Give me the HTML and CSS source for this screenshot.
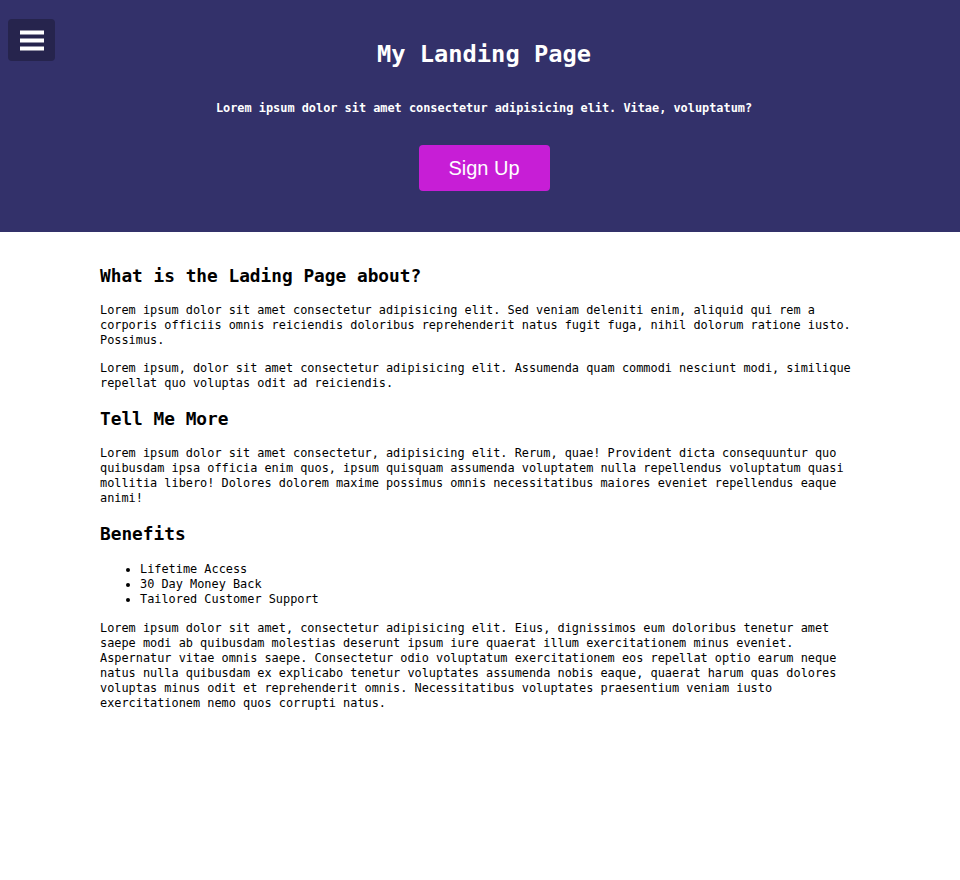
FILE: index.html
```html
<!DOCTYPE html>
<html lang="en">
<head>
<meta charset="utf-8">
<title>My Landing Page</title>
<link rel="stylesheet" href="styles.css">
</head>
<body>
<button class="menu-btn" aria-label="Menu">
  <svg width="24" height="22" viewBox="0 0 24 22">
    <rect x="0" y="1.5" width="24" height="4" fill="#fff"/>
    <rect x="0" y="9.5" width="24" height="4" fill="#fff"/>
    <rect x="0" y="17.5" width="24" height="4" fill="#fff"/>
  </svg>
</button>
<header class="hero">
  <h1 class="hero-title">My Landing Page</h1>
  <p class="hero-sub">Lorem ipsum dolor sit amet consectetur adipisicing elit. Vitae, voluptatum?</p>
  <a class="signup" href="#">Sign Up</a>
</header>
<main class="content">
  <h2 class="section-title">What is the Lading Page about?</h2>
  <p class="text">Lorem ipsum dolor sit amet consectetur adipisicing elit. Sed veniam deleniti enim, aliquid qui rem a corporis officiis omnis reiciendis doloribus reprehenderit natus fugit fuga, nihil dolorum ratione iusto. Possimus.</p>
  <p class="text">Lorem ipsum, dolor sit amet consectetur adipisicing elit. Assumenda quam commodi nesciunt modi, similique repellat quo voluptas odit ad reiciendis.</p>
  <h2 class="section-title">Tell Me More</h2>
  <p class="text">Lorem ipsum dolor sit amet consectetur, adipisicing elit. Rerum, quae! Provident dicta consequuntur quo quibusdam ipsa officia enim quos, ipsum quisquam assumenda voluptatem nulla repellendus voluptatum quasi mollitia libero! Dolores dolorem maxime possimus omnis necessitatibus maiores eveniet repellendus eaque animi!</p>
  <h2 class="section-title">Benefits</h2>
  <ul class="benefits">
    <li>Lifetime Access</li>
    <li>30 Day Money Back</li>
    <li>Tailored Customer Support</li>
  </ul>
  <p class="text">Lorem ipsum dolor sit amet, consectetur adipisicing elit. Eius, dignissimos eum doloribus tenetur amet saepe modi ab quibusdam molestias deserunt ipsum iure quaerat illum exercitationem minus eveniet. Aspernatur vitae omnis saepe. Consectetur odio voluptatum exercitationem eos repellat optio earum neque natus nulla quibusdam ex explicabo tenetur voluptates assumenda nobis eaque, quaerat harum quas dolores voluptas minus odit et reprehenderit omnis. Necessitatibus voluptates praesentium veniam iusto exercitationem nemo quos corrupti natus.</p>
</main>
</body>
</html>
```

FILE: styles.css
```css
* { box-sizing: border-box; }

body {
  margin: 0;
  background: #fff;
  color: #000;
  font-family: "DejaVu Sans Mono", "Liberation Mono", monospace;
  font-size: 11.88px;
  line-height: 15px;
}

.menu-btn {
  position: fixed;
  top: 19px;
  left: 8px;
  width: 47px;
  height: 42px;
  border: none;
  border-radius: 4px;
  background: #26244d;
  display: flex;
  align-items: center;
  justify-content: center;
  padding: 0;
  cursor: pointer;
}

.menu-btn svg { display: block; }

.hero {
  background: #33316a;
  color: #fff;
  text-align: center;
  padding: 39px 20px 41px 28px;
  display: flex;
  flex-direction: column;
  align-items: center;
}

.hero-title {
  margin: 0;
  font-size: 23.7px;
  line-height: 30px;
  font-weight: bold;
}

.hero-sub {
  margin: 32px 0 0;
  font-weight: bold;
  line-height: 15px;
}

.signup {
  margin-top: 29px;
  display: block;
  width: 131px;
  height: 46px;
  line-height: 46px;
  background: #c71ed6;
  color: #fff;
  border-radius: 4px;
  text-decoration: none;
  font-family: "Liberation Sans", Arial, sans-serif;
  font-size: 20px;
  text-align: center;
}

.content {
  width: 760px;
  margin: 0 auto;
  padding-top: 16px;
}

.section-title {
  margin: 16px 0;
  font-size: 17.8px;
  line-height: 23px;
  font-weight: bold;
}

.text {
  margin: 13px 0;
}

.benefits {
  margin: 17px 0 14px;
  padding-left: 40px;
}
```
